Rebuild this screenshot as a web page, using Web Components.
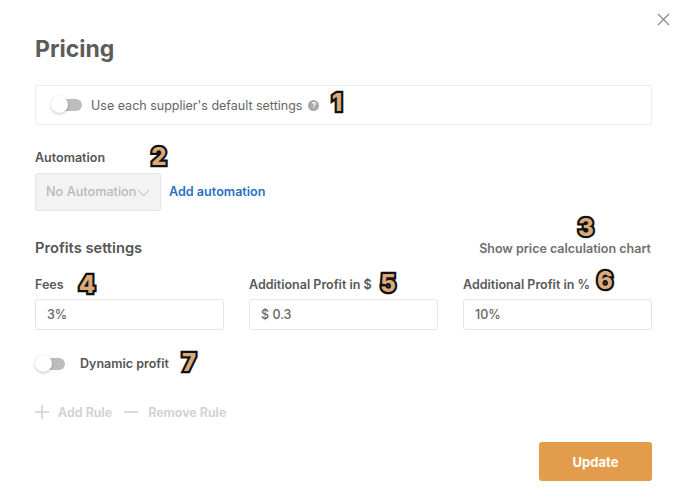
<!DOCTYPE html>
<html><head><meta charset="utf-8">
<style>
html,body{margin:0;padding:0;background:#fff;}
body{font-family:Inter,"Liberation Sans",sans-serif;color:#555;width:688px;height:502px;overflow:hidden;}
</style></head><body>
<template id="t-toggle"><style>
:host{display:block;position:relative;width:31px;height:18px;flex:none}
.track{position:absolute;left:6px;right:0;top:3px;height:12px;border-radius:6px;background:#bdbdbd}
.knob{position:absolute;left:0;top:0;width:17px;height:17px;border-radius:50%;background:#fff;box-shadow:0 1px 3px rgba(0,0,0,.25)}
</style><div class="track"></div><div class="knob"></div></template>

<template id="t-badge"><style>
:host{position:absolute;display:block;font:800 24px/26px Inter,"Liberation Sans",sans-serif;color:#d9ab7a;-webkit-text-stroke:4.5px #111;paint-order:stroke fill;transform:translateX(-50%);}
</style><slot></slot></template>

<template id="t-field"><style>
:host{display:block;width:189px}
.l{font-size:12.5px;font-weight:600;line-height:16px;color:#585858;height:16px;margin-bottom:6px;white-space:nowrap}
.i{box-sizing:border-box;height:31px;border:1px solid #e6e6e6;border-radius:3px;padding:0 10px 0 11px;display:flex;align-items:center;font-size:12.5px;font-weight:500;color:#666;}
</style><div class="l"><slot name="label"></slot></div><div class="i"><slot></slot></div></template>

<template id="t-modal"><style>
:host{display:block;position:relative;box-sizing:border-box;width:688px;height:502px;padding:34px 36px 0 35px}
h1{margin:0;font-size:23px;font-weight:700;line-height:30px;color:#5c5c5c;height:30px}
.close{position:absolute;left:657px;top:13px;width:13px;height:13px}
.box{box-sizing:border-box;margin-top:21px;height:40px;border:1px solid #ececec;border-radius:2px;padding:0 0 0 15px;display:flex;align-items:center;gap:9px;font-size:12.5px;color:#666}
.help{width:11px;height:11px;border-radius:50%;background:#a9a9a9;color:#fff;font-size:8px;font-weight:700;line-height:11px;text-align:center;margin-left:-3px}
.lbl{font-size:12.5px;font-weight:600;color:#555;line-height:16px;margin-top:25px}
.auto{display:flex;align-items:center;gap:8px;margin-top:7px}
.sel{box-sizing:border-box;width:126px;height:38px;background:#f3f3f3;border:1px solid #e4e4e4;border-radius:3px;padding-left:10px;display:flex;align-items:center;font-size:12.7px;font-weight:500;color:#b9b9b9;white-space:nowrap;line-height:15px;padding-bottom:1px}
.sel svg{margin-left:1px;margin-top:2px}
.link{font-size:12.6px;font-weight:600;color:#2a6fc4;line-height:15px;margin-top:-1px}
.hd{display:flex;justify-content:space-between;align-items:flex-end;margin-top:28px;height:18px}
.hd b{font-size:14.7px;font-weight:600;color:#555;line-height:18px}
.hd span{font-size:12.5px;font-weight:600;color:#707070;line-height:16px;margin-right:1px}
.fields{display:flex;gap:25px;margin-top:20px}
.dyn{display:flex;align-items:center;gap:15px;margin-top:25px;height:18px;font-size:12.5px;font-weight:600;color:#555}
.dyn x-toggle{width:30px}
.dyn span{margin-top:-2px}
.rules{display:flex;align-items:center;margin-top:30px;height:18px;font-size:12.5px;font-weight:600;color:#d0d0d0}
.rules svg{flex:none}
.foot{display:flex;justify-content:flex-end;margin-top:21px}
.btn{box-sizing:border-box;width:113px;height:39px;background:#e39c4c;border-radius:3px;color:#fff;font-size:13px;font-weight:700;display:flex;align-items:center;justify-content:center}
</style>
<svg class="close" viewBox="0 0 13 13"><path d="M1 1L12 12M12 1L1 12" stroke="#8a8a8a" stroke-width="1.2" fill="none"/></svg>
<h1>Pricing</h1>
<div class="box"><x-toggle></x-toggle><span>Use each supplier's default settings</span><span class="help">?</span></div>
<div class="lbl">Automation</div>
<div class="auto"><div class="sel">No Automation<svg width="13" height="8" viewBox="0 0 13 8"><path d="M1 1L6.5 7L12 1" stroke="#b5b5b5" stroke-width="1" fill="none"/></svg></div><span class="link">Add automation</span></div>
<div class="hd"><b>Profits settings</b><span>Show price calculation chart</span></div>
<div class="fields">
<x-field><span slot="label">Fees</span>3%</x-field>
<x-field><span slot="label">Additional Profit in $</span>$ 0.3</x-field>
<x-field><span slot="label">Additional Profit in %</span>10%</x-field>
</div>
<div class="dyn"><x-toggle></x-toggle><span>Dynamic profit</span></div>
<div class="rules">
<svg width="14" height="14" viewBox="0 0 14 14" style="margin-right:9px"><path d="M7 0V14M0 7H14" stroke="#cfcfcf" stroke-width="1.5"/></svg><span>Add Rule</span>
<svg width="14" height="14" viewBox="0 0 14 14" style="margin:0 10px 0 12px"><path d="M0 7H14" stroke="#cfcfcf" stroke-width="1.5"/></svg><span>Remove Rule</span>
</div>
<div class="foot"><div class="btn">Update</div></div>
<x-badge style="left:337px;top:90px">1</x-badge>
<x-badge style="left:159px;top:144px">2</x-badge>
<x-badge style="left:586px;top:215px">3</x-badge>
<x-badge style="left:87px;top:272px">4</x-badge>
<x-badge style="left:388px;top:271px">5</x-badge>
<x-badge style="left:605px;top:268px">6</x-badge>
<x-badge style="left:189px;top:350px">7</x-badge>
</template>
<x-modal></x-modal>
<script>
for (const [n,t] of [['x-toggle','t-toggle'],['x-badge','t-badge'],['x-field','t-field'],['x-modal','t-modal']]) {
  customElements.define(n, class extends HTMLElement {
    constructor(){super();this.attachShadow({mode:'open'}).appendChild(document.getElementById(t).content.cloneNode(true));}
  });
}
</script>
</body></html>
